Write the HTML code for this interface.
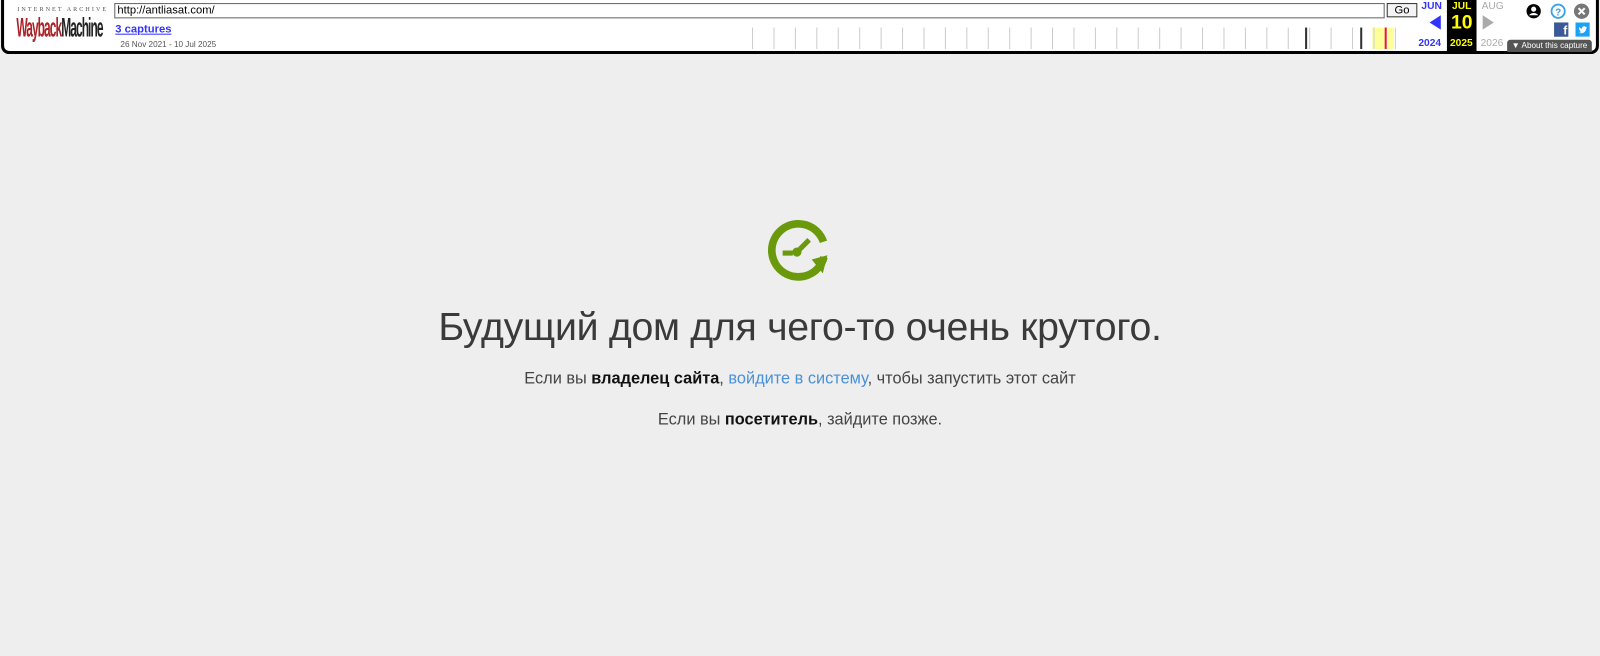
<!DOCTYPE html>
<html><head><meta charset="utf-8"><style>
body{margin:0;width:1600px;height:656px;background:#eeeeee;font-family:"Liberation Sans",sans-serif;overflow:hidden;position:relative}
#w{position:absolute;left:0;top:0;width:1568px;height:643px;transform:scale(1.0204);transform-origin:0 0}
#tb{position:absolute;left:1px;top:0;width:1560px;height:50px;background:#fff;border:3px solid #000;border-top:none;border-radius:0 0 8px 8px}
.a{position:absolute}
.tick{position:absolute;top:27px;width:1px;height:21px;background:#ccc}
h1{position:absolute;top:299px;left:0;width:1568px;text-align:center;margin:0;font-family:"Liberation Sans",sans-serif;font-weight:normal;font-size:38.5px;color:#3a3a3a;letter-spacing:-0.3px}
p{position:absolute;left:0;width:1568px;text-align:center;margin:0;font-family:"Liberation Sans",sans-serif;font-size:16px;color:#444}
b{font-weight:bold;color:#111}
</style></head><body>
<div id="w">
<div id="tb">
<div class="a" style="left:13px;top:7px;font-family:'Liberation Serif',serif;font-size:6px;letter-spacing:2px;color:#555">INTERNET ARCHIVE</div>
<div class="a" style="left:12px;top:12px;font-family:'Liberation Sans',sans-serif;font-weight:bold;font-size:26px;letter-spacing:-2px;transform:scaleX(0.45);transform-origin:left;color:#ab2328;white-space:nowrap">Wayback<span style="color:#222">Machine</span></div>
<div class="a" style="left:108px;top:3px;width:1241px;height:13px;border:1px solid #666;font-size:11px;line-height:13px;padding-left:2px">http://antliasat.com/</div>
<div class="a" style="left:1355px;top:3px;width:28px;height:12px;border:1px solid #333;background:#f4f4f4;font-size:11px;line-height:12px;text-align:center">Go</div>
<div class="a" style="left:109px;top:23px;font-size:11px;color:#33f;text-decoration:underline;font-weight:bold">3 captures</div>
<div class="a" style="left:114px;top:39px;font-size:8px;color:#555">26 Nov 2021 - 10 Jul 2025</div>
<div class="a" style="left:1341px;top:27px;width:21px;height:21px;background:#ffff99"></div>
<div class="a" style="left:1353px;top:27px;width:2px;height:21px;background:#e3155f"></div>
<div class="a" style="left:1275px;top:27px;width:2px;height:21px;background:#333"></div>
<div class="a" style="left:1329px;top:27px;width:2px;height:21px;background:#333"></div>
<div class="a" style="left:1389px;top:1px;font-size:10px;font-weight:bold;color:#33f">JUN</div>
<div class="a" style="left:1397px;top:15px;width:0;height:0;border-top:7px solid transparent;border-bottom:7px solid transparent;border-right:11px solid #33f"></div>
<div class="a" style="left:1386px;top:37px;font-size:10px;font-weight:bold;color:#33f">2024</div>
<div class="a" style="left:1414px;top:0;width:29px;height:50px;background:#000"></div>
<div class="a" style="left:1419px;top:1px;font-size:10px;font-weight:bold;color:#ff0">JUL</div>
<div class="a" style="left:1418px;top:12px;font-size:19px;font-weight:bold;color:#ff0">10</div>
<div class="a" style="left:1417px;top:37px;font-size:10px;font-weight:bold;color:#ff0">2025</div>
<div class="a" style="left:1448px;top:1px;font-size:10px;color:#aaa">AUG</div>
<div class="a" style="left:1449px;top:15px;width:0;height:0;border-top:7px solid transparent;border-bottom:7px solid transparent;border-left:11px solid #aaa"></div>
<div class="a" style="left:1447px;top:37px;font-size:10px;color:#aaa">2026</div>
<div class="a" style="left:1473px;top:39px;width:83px;height:12px;background:#555;border-radius:3px 3px 0 0;color:#fff;font-size:8px;line-height:12px;text-align:center">▼ About this capture</div>
<svg class="a" style="left:1491px;top:3px" width="16" height="16"><circle cx="8" cy="8" r="7" fill="#000"/><circle cx="8" cy="6" r="2.5" fill="#fff"/><path d="M3.5 12a5 4 0 0 1 9 0" fill="#fff"/></svg>
<svg class="a" style="left:1515px;top:3px" width="16" height="16"><circle cx="8" cy="8" r="6.5" fill="none" stroke="#3aa3e3" stroke-width="1.8"/><text x="8" y="12" font-size="10" font-weight="bold" text-anchor="middle" fill="#3aa3e3" font-family="Liberation Sans">?</text></svg>
<svg class="a" style="left:1538px;top:3px" width="16" height="16"><circle cx="8" cy="8" r="7.5" fill="#777"/><path d="M5 5l6 6M11 5l-6 6" stroke="#fff" stroke-width="2"/></svg>
<div class="a" style="left:1519px;top:22px;width:14px;height:14px;background:#3b5998;color:#fff;font-weight:bold;font-size:12px;line-height:16px;text-align:right;padding-right:1px;box-sizing:border-box">f</div>
<svg class="a" style="left:1540px;top:22px" width="14" height="14"><rect width="14" height="14" fill="#1da1f2"/><path d="M3 10c3 1.5 7 0 7.5-4l1-1-1 .2.5-1-1 .3a2 2 0 0 0-3.5 1.8C5 6 4 5 3.5 4.5c-.3 1 .2 2 .8 2.3l-.8-.1c.1 1 .8 1.5 1.5 1.7H4.3c.3.7 1 1 1.6 1C5 10 4 10.2 3 10z" fill="#fff"/></svg>
</div>
<svg class="a" style="left:751px;top:214px" width="68" height="64"><path d="M56.5 38A26 26 0 1 1 56 23" fill="none" stroke="#6a9a0b" stroke-width="7.5"/><path d="M46 38h16l-9 16z" fill="#6a9a0b" transform="rotate(-15 54 45)"/><path d="M16 34h10" stroke="#6a9a0b" stroke-width="5"/><path d="M31 32L42 21" stroke="#6a9a0b" stroke-width="5"/><circle cx="30" cy="33" r="4.5" fill="#6a9a0b"/></svg>
<h1>Будущий дом для чего-то очень крутого.</h1>
<p style="top:363px">Если вы <b>владелец сайта</b>, <span style="color:#4a90d9">войдите в систему</span>, чтобы запустить этот сайт</p>
<p style="top:403px">Если вы <b>посетитель</b>, зайдите позже.</p>
</div>
<script>
for(let x=733;x<=1383;x+=21){let d=document.createElement('div');d.className='tick';d.style.left=x+'px';document.getElementById('tb').appendChild(d);}
</script>
</body></html>
